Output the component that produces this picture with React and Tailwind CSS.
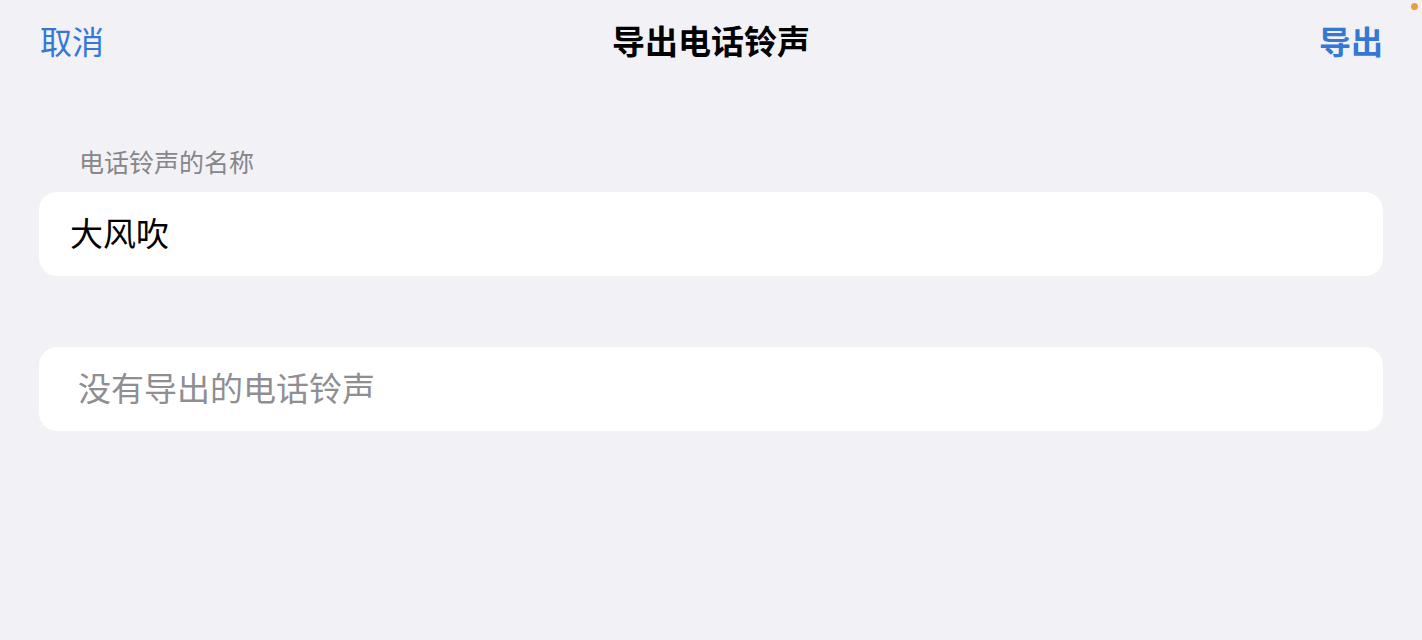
import React from 'react';

const font = { fontFamily: '"Noto Sans CJK SC", "Noto Sans", sans-serif' };

const App = () => {
  return (
    <div className="relative w-full min-h-screen h-[640px] bg-[#f1f1f6] px-[39px]" style={font}>
      {/* recording indicator */}
      <div className="absolute top-[3px] right-[4px] w-[7px] h-[7px] rounded-full bg-[#e9a23b]" />

      <div className="grid grid-cols-[1fr_auto_1fr] items-center h-[84px] pb-[4px]">
        <button className="justify-self-start text-[32px] leading-none text-[#3478d6] pl-[1px]">取消</button>
        <h1 className="text-[33px] leading-none font-bold text-black">导出电话铃声</h1>
        <button className="justify-self-end text-[32px] leading-none font-semibold text-[#3478d6]">导出</button>
      </div>

      <div className="mt-[62px] mb-[16px] pl-[40px] text-[25px] leading-[30px] text-[#86868b]">电话铃声的名称</div>

      <div className="h-[84px] rounded-[18px] bg-white flex items-center pl-[31px] pb-[4px]">
        <span className="text-[33px] leading-none text-black">大风吹</span>
      </div>

      <div className="mt-[71px] h-[84px] rounded-[18px] bg-white flex items-center pl-[39px] pb-[4px]">
        <span className="text-[33px] leading-none text-[#8e8e93]">没有导出的电话铃声</span>
      </div>
    </div>
  );
};

export default App;
